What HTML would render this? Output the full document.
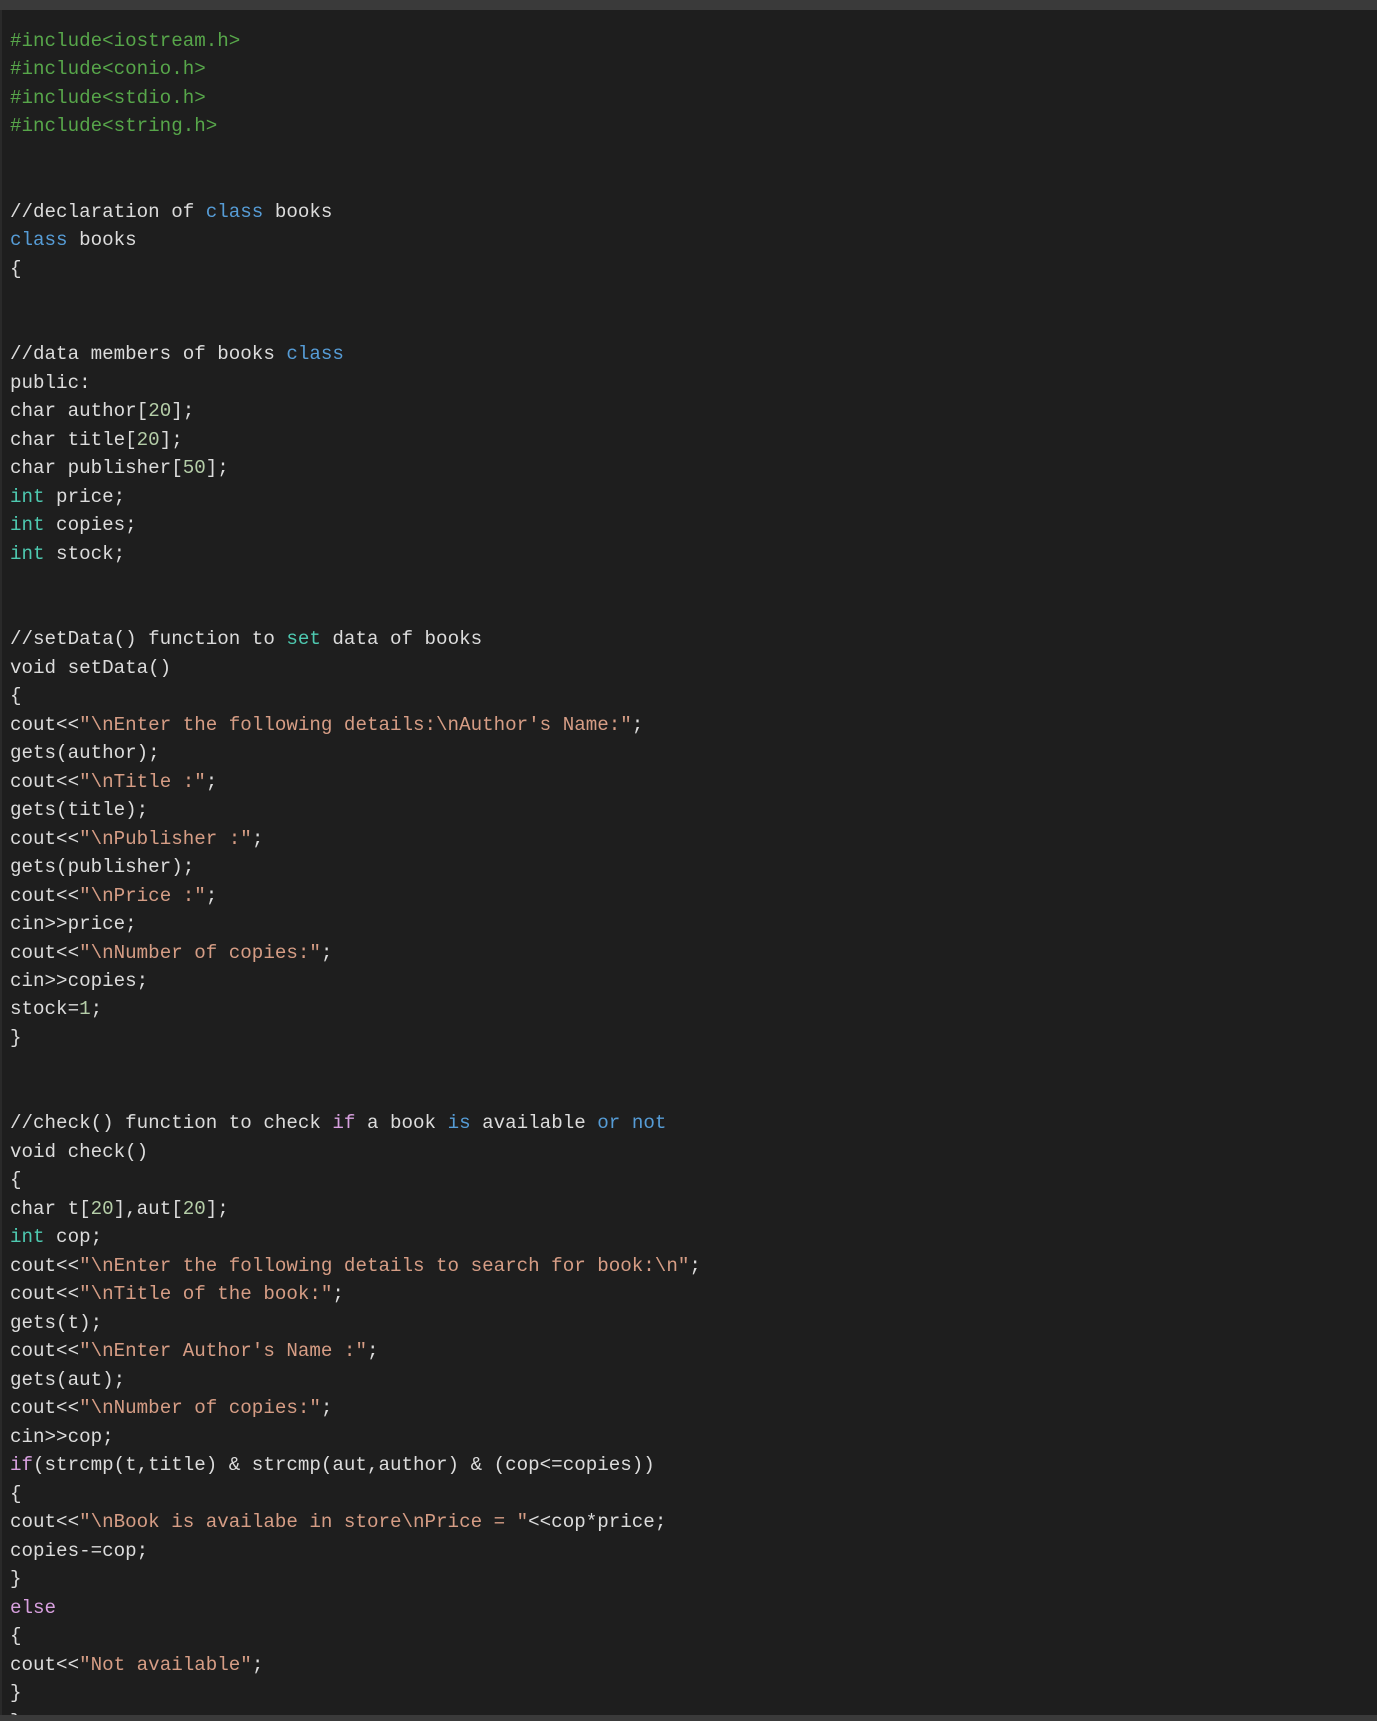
<!DOCTYPE html>
<html><head><style>
html,body{margin:0;padding:0;background:#1e1e1e;width:1377px;height:1721px;overflow:hidden;position:relative}
.top{position:absolute;left:0;top:0;width:1377px;height:10px;background:#3a3a3a}
.bot{position:absolute;left:0;top:1715px;width:1377px;height:6px;background:#3a3a3a}
.lb{position:absolute;left:0;top:10px;width:2px;height:1705px;background:#2a2a2a}
pre{position:absolute;left:10px;top:27px;margin:0;font-family:"Liberation Mono",monospace;font-size:19.2px;line-height:28.48px;color:#dcdcdc}
.g{color:#57a64a}.k{color:#569cd6}.t{color:#4ec9b0}.s{color:#d69d85}.n{color:#b5cea8}.p{color:#d8a0df}
</style></head><body>
<div class="top"></div><div class="lb"></div>
<pre><span class="g">#include&lt;iostream.h&gt;
#include&lt;conio.h&gt;
#include&lt;stdio.h&gt;
#include&lt;string.h&gt;</span>


//declaration of <span class="k">class</span> books
<span class="k">class</span> books
{


//data members of books <span class="k">class</span>
public:
char author[<span class="n">20</span>];
char title[<span class="n">20</span>];
char publisher[<span class="n">50</span>];
<span class="t">int</span> price;
<span class="t">int</span> copies;
<span class="t">int</span> stock;


//setData() function to <span class="t">set</span> data of books
void setData()
{
cout&lt;&lt;<span class="s">"\nEnter the following details:\nAuthor's Name:"</span>;
gets(author);
cout&lt;&lt;<span class="s">"\nTitle :"</span>;
gets(title);
cout&lt;&lt;<span class="s">"\nPublisher :"</span>;
gets(publisher);
cout&lt;&lt;<span class="s">"\nPrice :"</span>;
cin&gt;&gt;price;
cout&lt;&lt;<span class="s">"\nNumber of copies:"</span>;
cin&gt;&gt;copies;
stock=<span class="n">1</span>;
}


//check() function to check <span class="p">if</span> a book <span class="k">is</span> available <span class="k">or</span> <span class="k">not</span>
void check()
{
char t[<span class="n">20</span>],aut[<span class="n">20</span>];
<span class="t">int</span> cop;
cout&lt;&lt;<span class="s">"\nEnter the following details to search for book:\n"</span>;
cout&lt;&lt;<span class="s">"\nTitle of the book:"</span>;
gets(t);
cout&lt;&lt;<span class="s">"\nEnter Author's Name :"</span>;
gets(aut);
cout&lt;&lt;<span class="s">"\nNumber of copies:"</span>;
cin&gt;&gt;cop;
<span class="p">if</span>(strcmp(t,title) &amp; strcmp(aut,author) &amp; (cop&lt;=copies))
{
cout&lt;&lt;<span class="s">"\nBook is availabe in store\nPrice = "</span>&lt;&lt;cop*price;
copies-=cop;
}
<span class="p">else</span>
{
cout&lt;&lt;<span class="s">"Not available"</span>;
}
}</pre>
<div class="bot"></div>
</body></html>
